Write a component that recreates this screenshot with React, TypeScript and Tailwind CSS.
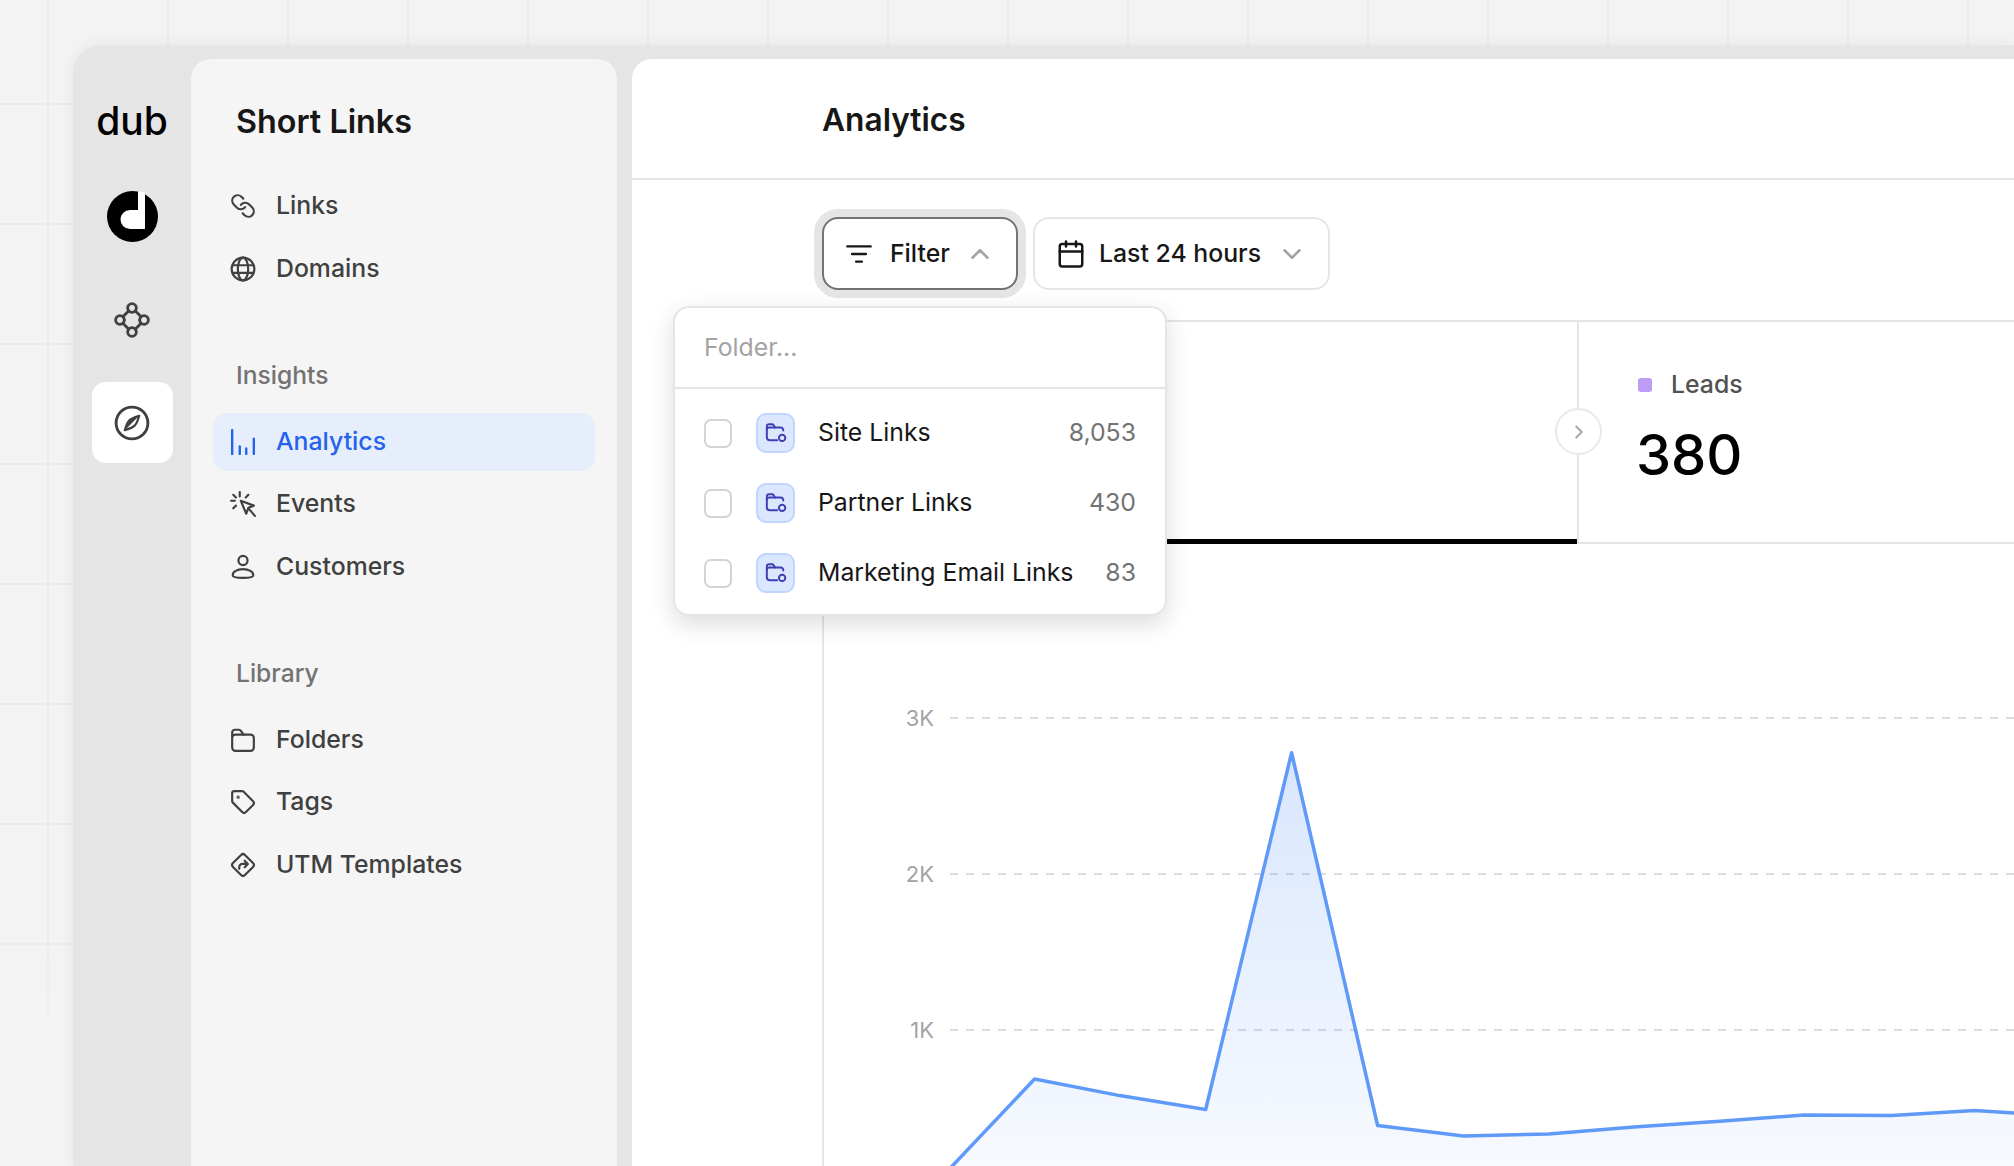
import { Calendar, ChevronDown, ChevronRight, ChevronUp, Tag } from 'lucide-react';
import type { ReactNode } from 'react';

const ICON = {
  width: 26,
  height: 26,
  viewBox: '0 0 24 24',
  fill: 'none',
  stroke: 'currentColor',
  strokeWidth: 2,
  strokeLinecap: 'round' as const,
  strokeLinejoin: 'round' as const,
};

const LinkIcon = () => (
  <svg {...ICON}>
    <g transform="matrix(-1 0 0 1 24 0)">
      <path d="M10 13a5 5 0 0 0 7.540.540l3-3a5 5 0 0 0-7.070-7.070l-1.720 1.710" />
      <path d="M14 11a5 5 0 0 0-7.540-.540l-3 3a5 5 0 0 0 7.070 7.070l1.710-1.710" />
    </g>
  </svg>
);

const GlobeIcon = () => (
  <svg {...ICON}>
    <circle cx="12" cy="12" r="10.5" />
    <ellipse cx="12" cy="12" rx="4.8" ry="10.5" />
    <path d="M2.5 8.5h19M2.5 15.5h19" />
  </svg>
);

const BarsIcon = () => (
  <svg {...ICON} strokeWidth={2.2}>
    <path d="M2 1v22M9 16v7M15 18v5M22 9v14" />
  </svg>
);

const ClickIcon = () => (
  <svg {...ICON}>
    <path d="M9 1v4M1 9h3.5M3 3.5 5.5 6M17 3.5 14.5 6M3 16l2.5-2.5" />
    <path d="M10 9 22 13.5l-5 2-2 5.5z" />
    <path d="m17 16 6 7" />
  </svg>
);

const PersonIcon = () => (
  <svg {...ICON}>
    <circle cx="12" cy="6" r="4.2" />
    <path d="M2.5 19.5c0-3 4-5.5 9.5-5.5s9.5 2.5 9.5 5.5c0 1.6-3.5 2.5-9.5 2.5s-9.5-.9-9.5-2.5z" />
  </svg>
);

const FolderIcon = () => (
  <svg {...ICON}>
    <path d="M2 8.5V5a2.5 2.5 0 0 1 2.5-2.5h3.6a2.5 2.5 0 0 1 2 1L12.5 7" />
    <rect x="2" y="7" width="20" height="15" rx="3" />
  </svg>
);

const RoadSignIcon = () => (
  <svg {...ICON}>
    <rect x="4.2" y="4.2" width="15.6" height="15.6" rx="2.5" transform="rotate(45 12 12)" />
    <path d="M8.5 15.5V14a3 3 0 0 1 3-3h4.5M13.5 8l3 3-3 3" />
  </svg>
);

const NetworkIcon = () => (
  <svg width="36" height="36" viewBox="0 0 24 24" fill="none" stroke="currentColor" strokeWidth="1.9" strokeLinecap="round">
    <circle cx="12" cy="4" r="2.9" />
    <circle cx="4" cy="12" r="2.9" />
    <circle cx="20" cy="12" r="2.9" />
    <circle cx="12" cy="20" r="2.9" />
    <path d="M9.9 5.9 5.9 9.9M14.1 5.9l4 4M5.9 14.1l4 4M18.1 14.1l-4 4" />
  </svg>
);

const CompassIcon = () => (
  <svg width="36" height="36" viewBox="0 0 24 24" fill="none" stroke="currentColor" strokeWidth="1.9" strokeLinejoin="round">
    <circle cx="12" cy="12" r="10.6" />
    <path d="M16.800 7.200C13.500 8.200 11 9.200 10 10.500 8.800 11.800 8 14 7.200 16.800 10.500 15.800 13 14.800 14 13.500 15.200 12.200 16 10 16.800 7.200z" strokeWidth="1.500" />
    <path d="M7.200 16.800C8 14 8.800 11.800 10 10.500 11 9.200 13.500 8.200 16.800 7.200z" fill="currentColor" stroke="none" />
  </svg>
);

const DubMark = () => (
  <svg width="51" height="51" viewBox="0 0 51 51">
    <circle cx="25.500" cy="25.500" r="25.500" fill="#000" />
    <path d="M31 0.400 38 1.600V38H23a9.500 9.500 0 0 1 0-19h8z" fill="#fff" />
  </svg>
);

const FilterLines = () => (
  <svg {...ICON} width={28} height={28}>
    <path d="M2 5.500h20M6 12h12M9.500 18.500h5" />
  </svg>
);

const FolderSmall = () => (
  <svg width="22" height="22" viewBox="0 0 18 18" fill="none" stroke="#3f3fb5" strokeWidth="1.600" strokeLinecap="round" strokeLinejoin="round">
    <path d="M10 15H4a2.500 2.500 0 0 1-2.500-2.500V3.500A1.800 1.800 0 0 1 3.300 1.800h2.400c.6 0 1.100.3 1.400.8L8.200 4.500" />
    <path d="M1.500 6.200A2 2 0 0 1 3.500 4.500h9.200a2.500 2.500 0 0 1 2.300 2.500" />
    <circle cx="14" cy="13" r="2.600" />
  </svg>
);

const NavRow = ({ icon, label, active }: { icon: ReactNode; label: string; active?: boolean }) => (
  <div
    className={`flex h-[58px] items-center gap-[20px] rounded-[14px] pl-[17px] text-[24.800px] font-medium ${
      active ? 'bg-[#e7eefb] text-[#2563eb]' : 'text-[#404040]'
    }`}
  >
    <span className="flex w-[26px] shrink-0 justify-center">{icon}</span>
    {label}
  </div>
);

const NavLabel = ({ children }: { children: string }) => (
  <div className="mb-[22px] mt-[61px] h-[32px] pl-[23px] text-[24.600px] font-medium leading-[32px] text-[#737373]">{children}</div>
);

const folders = [
  { name: 'Site Links', count: '8,053' },
  { name: 'Partner Links', count: '430' },
  { name: 'Marketing Email Links', count: '83' },
];

const points = [
  [949.4, 1168],
  [1034.6, 1078],
  [1119.8, 1094.6],
  [1205.7, 1108.5],
  [1291.6, 751.7],
  [1377.6, 1124.5],
  [1463.5, 1135],
  [1548.7, 1133],
  [1633.9, 1126],
  [1719.8, 1120.3],
  [1804, 1114],
  [1891.7, 1114.4],
  [1974.5, 1109.5],
  [2016, 1112],
];
const line = points.map((p) => p.join(',')).join(' ');

const Chart = () => (
  <svg className="block" width="1190" height="622" viewBox="824 543 1190 622">
    <defs>
      <linearGradient id="area" x1="0" y1="0" x2="0" y2="1">
        <stop offset="0%" stopColor="#3b82f6" stopOpacity="0.2" />
        <stop offset="100%" stopColor="#3b82f6" stopOpacity="0.04" />
      </linearGradient>
    </defs>
    {[
      { y: 717, label: '3K' },
      { y: 873, label: '2K' },
      { y: 1029, label: '1K' },
    ].map((t) => (
      <g key={t.label}>
        <line x1="950" x2="2014" y1={t.y} y2={t.y} stroke="#dcdcdc" strokeWidth="2" strokeDasharray="8 8" />
        <text x="934" y={t.y + 8} textAnchor="end" fontSize="22" fill="#a3a3a3">
          {t.label}
        </text>
      </g>
    ))}
    <polygon points={`${line} 2016,1168`} fill="url(#area)" />
    <polyline points={line} fill="none" stroke="#609af8" strokeWidth="3.500" strokeLinejoin="round" />
  </svg>
);

const App: React.FC = () => {
  return (
    <div className="relative h-[1166px] w-[2014px] overflow-hidden bg-[#f3f3f3] font-['Inter','Liberation_Sans',sans-serif]">
      {/* faint page grid behind the app frame */}
      <div className="absolute inset-0 bg-[linear-gradient(to_right,#ebebeb_2px,transparent_2px),linear-gradient(to_bottom,#ebebeb_2px,transparent_2px)] bg-[size:120px_120px] bg-[position:47px_103px] [mask-image:linear-gradient(to_bottom,black_80%,transparent_92%)]" />

      <div className="relative h-full pl-[73px] pt-[45px]">
        <div className="flex h-full rounded-tl-[28px] bg-[#e5e5e5] shadow-[0_0_16px_rgba(0,0,0,0.06)]">
          {/* icon rail */}
          <div className="flex w-[118px] shrink-0 flex-col items-center pt-[56px] text-[#404040]">
            <div className="h-[40px] text-[39px] font-medium leading-[40px] text-black">dub</div>
            <div className="mt-[50px] h-[51px]">
              <DubMark />
            </div>
            <div className="mt-[60px] h-[36px]">
              <NetworkIcon />
            </div>
            <div className="mt-[44px] flex h-[81px] w-[81px] items-center justify-center rounded-[14px] bg-white">
              <CompassIcon />
            </div>
          </div>

          {/* sidebar */}
          <div className="mt-[14px] w-[426px] shrink-0 rounded-t-[20px] bg-[#f5f5f5] px-[22px] pt-[43px]">
            <div className="h-[40px] pl-[23px] text-[32.300px] font-semibold leading-[40px] text-[#171717]">Short Links</div>
            <div className="mt-[35px] flex flex-col gap-[4.500px]">
              <NavRow icon={<LinkIcon />} label="Links" />
              <NavRow icon={<GlobeIcon />} label="Domains" />
            </div>
            <NavLabel>Insights</NavLabel>
            <div className="flex flex-col gap-[4.500px]">
              <NavRow icon={<BarsIcon />} label="Analytics" active />
              <NavRow icon={<ClickIcon />} label="Events" />
              <NavRow icon={<PersonIcon />} label="Customers" />
            </div>
            <NavLabel>Library</NavLabel>
            <div className="flex flex-col gap-[4.500px]">
              <NavRow icon={<FolderIcon />} label="Folders" />
              <NavRow icon={<Tag size={26} strokeWidth={2} />} label="Tags" />
              <NavRow icon={<RoadSignIcon />} label="UTM Templates" />
            </div>
          </div>

          {/* main */}
          <div className="ml-[15px] mt-[14px] flex min-w-0 flex-1 flex-col rounded-tl-[20px] bg-white">
            <div className="flex h-[121px] shrink-0 items-center border-b-2 border-[#e5e5e5] pl-[190px] pt-[2px] text-[31.700px] font-semibold text-[#171717]">
              Analytics
            </div>
            <div className="flex min-h-0 flex-1 flex-col pl-[190px]">
              <div className="flex shrink-0 gap-[15px] pb-[30px] pt-[37px]">
                <div className="relative">
                  <button className="flex h-[73px] w-[196px] items-center rounded-[16px] border-2 border-[#737373] bg-white pl-[21px] text-[24.800px] font-medium text-[#171717] ring-[8px] ring-[#e5e5e5]">
                    <FilterLines />
                    <span className="ml-[17px]">Filter</span>
                    <ChevronUp size={30} className="ml-[15px] text-[#a3a3a3]" />
                  </button>

                  {/* folder filter popover */}
                  <div className="absolute left-[-149px] top-[89px] z-10 w-[494px] rounded-[16px] border-2 border-[#e5e5e5] bg-white shadow-[0_8px_24px_rgba(0,0,0,0.14)]">
                    <div className="flex h-[81px] items-center border-b-2 border-[#e5e5e5] pl-[29px] text-[24.800px] text-[#a3a3a3]">Folder...</div>
                    <div className="pb-[6px] pt-[9px]">
                      {folders.map((f) => (
                        <div key={f.name} className="flex h-[70px] items-center pl-[29px] pr-[29px] text-[24.800px] text-[#171717]">
                          <div className="h-[29px] w-[28px] shrink-0 rounded-[7px] border-2 border-[#d4d4d4] bg-white" />
                          <div className="ml-[24px] flex h-[40px] w-[39px] shrink-0 items-center justify-center rounded-[10px] border-2 border-[#bfd5fd] bg-[#dbe7fe]">
                            <FolderSmall />
                          </div>
                          <span className="ml-[23px] flex-1 whitespace-nowrap">{f.name}</span>
                          <span className="text-[#737373]">{f.count}</span>
                        </div>
                      ))}
                    </div>
                  </div>
                </div>
                <button className="flex h-[73px] w-[297px] items-center rounded-[16px] border-2 border-[#e5e5e5] bg-white pl-[21px] text-[24.800px] font-medium text-[#171717]">
                  <Calendar size={30} strokeWidth={2} />
                  <span className="ml-[13px]">Last 24 hours</span>
                  <ChevronDown size={30} className="ml-[16px] text-[#a3a3a3]" />
                </button>
              </div>

              {/* stat tabs */}
              <div className="flex h-[224px] shrink-0 border-y-2 border-l-2 border-[#e5e5e5]">
                <div className="-mb-[2px] w-[753px] shrink-0 border-b-[5px] border-black" />
                <div className="relative -mb-[2px] flex-1 border-b-2 border-l-2 border-[#e5e5e5] pl-[59px] pt-[49px]">
                  <button className="absolute left-[-24px] top-[86px] flex h-[47px] w-[47px] items-center justify-center rounded-full border-2 border-[#e9e9e9] bg-white text-[#a3a3a3]">
                    <ChevronRight size={22} />
                  </button>
                  <div className="flex h-[28px] items-center gap-[19px] text-[24.800px] font-medium text-[#525252]">
                    <span className="h-[14px] w-[14px] rounded-[3px] bg-[#bd9cf5]" />
                    Leads
                  </div>
                  <div className="-ml-[2px] mt-[21px] h-[70px] text-[56px] font-medium leading-[70px] text-black">380</div>
                </div>
              </div>

              <div className="min-h-0 flex-1 border-l-2 border-[#e5e5e5]">
                <Chart />
              </div>
            </div>
          </div>
        </div>
      </div>
    </div>
  );
};

export default App;
